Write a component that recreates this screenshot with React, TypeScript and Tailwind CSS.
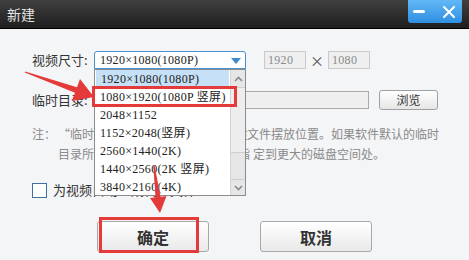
import { useState } from "react";

const sizes = [
  "1920×1080(1080P)",
  "1080×1920(1080P 竖屏)",
  "2048×1152",
  "1152×2048(竖屏)",
  "2560×1440(2K)",
  "1440×2560(2K 竖屏)",
  "3840×2160(4K)",
];

const num = "font-['Liberation_Serif','Noto_Sans_CJK_SC',serif] tracking-[0.3px]";

function Chevron({ up }: { up?: boolean }) {
  return (
    <svg width="9" height="6" viewBox="0 0 9 6">
      <path
        d={up ? "M1 5 L4.5 1.5 L8 5" : "M1 1 L4.5 4.5 L8 1"}
        fill="none"
        stroke="#8a8a8a"
        strokeWidth="1.6"
      />
    </svg>
  );
}

function SizeSelect() {
  const [value] = useState(sizes[0]);

  return (
    <div className="relative w-[152px] h-[18px] bg-white border border-[#4a8fcf] rounded-t-[3px] flex items-center pl-[5px]">
      <span className={`text-[12px] text-[#222] ${num}`}>{value}</span>
      <svg className="absolute right-[4px] top-[6px]" width="10" height="6" viewBox="0 0 10 6">
        <path d="M0 0 H10 L5 6 Z" fill="#3a8ad0" />
      </svg>

      <div className="absolute left-[-1px] top-[17px] w-[152px] h-[127px] bg-white border border-[#8c8c8c] flex z-10">
        <ul className="flex-1">
          {sizes.map((s, i) => (
            <li
              key={s}
              className={`h-[18px] flex items-center pl-[5px] text-[12px] text-[#222] ${num} ${
                i === 0 ? "bg-[#c6e0f7] mx-[1px] pl-[4px]" : ""
              }`}
            >
              {s}
            </li>
          ))}
        </ul>
        <div className="w-[15px] flex flex-col bg-[#e6e6e6] border-l border-[#d4d4d4]">
          <div className="h-[17px] flex items-center justify-center">
            <Chevron up />
          </div>
          <div className="h-[66px] bg-[#ededed] border-y border-[#cfcfcf]" />
          <div className="flex-1" />
          <div className="h-[16px] flex items-center justify-center border-t border-[#cfcfcf]">
            <Chevron />
          </div>
        </div>
      </div>
    </div>
  );
}

export default function App() {
  return (
    <div className="relative w-[469px] h-[260px] overflow-hidden bg-[#f4f5f7] font-['Noto_Sans_CJK_SC',sans-serif]">
      <header className="h-[29px] flex justify-between bg-gradient-to-b from-[#404040] to-[#1e1e1e] border-b border-black">
        <h1 className="pl-[7px] pt-[4px] text-[14px] leading-[20px] text-[#e4e4e4]">新建</h1>
        <div className="mr-[7px] w-[54px] h-[23px] rounded-b-[3px] bg-gradient-to-b from-[#62b8f6] to-[#2f8fe0] flex items-center justify-between px-[5px]">
          <span className="w-[12px] h-[3px] rounded-full bg-white" />
          <svg width="12" height="12" viewBox="0 0 12 12" className="mr-[2px]">
            <path d="M1 1 L11 11 M11 1 L1 11" stroke="white" strokeWidth="2" strokeLinecap="round" />
          </svg>
        </div>
      </header>

      <main className="pl-[32px] pt-[22px] text-[#333]">
        <div className="flex items-center h-[18px]">
          <span className="w-[62px] text-[13px]">视频尺寸:</span>
          <SizeSelect />
          <div className={`ml-[18px] w-[42px] h-[18px] bg-[#efefef] border border-[#c9c9c9] flex items-center pl-[3px] text-[12px] text-[#8a8a8a] ${num}`}>
            1920
          </div>
          <span className="w-[22px] text-center text-[14px] text-[#555]">×</span>
          <div className={`w-[42px] h-[18px] bg-[#efefef] border border-[#c9c9c9] flex items-center pl-[3px] text-[12px] text-[#8a8a8a] ${num}`}>
            1080
          </div>
        </div>

        <div className="mt-[21px] flex items-center h-[20px]">
          <span className="w-[62px] text-[13px]">临时目录:</span>
          <div className="w-[275px] h-[18px] bg-[#efefef] border border-[#a9a9a9]" />
          <button className="ml-[10px] w-[59px] h-[20px] rounded-[3px] border border-[#a0a0a0] bg-gradient-to-b from-white to-[#e6e6e6] text-[12px] text-[#333]">
            浏览
          </button>
        </div>

        <div className="mt-[14px] flex text-[12px] leading-[20px] text-[#8a8a8a]">
          <span className="w-[26px]">注：</span>
          <p className="whitespace-nowrap">
            <span className="inline-block w-[189px] overflow-hidden align-top">“临时目录”是视频编辑过程中临时</span>
            文件摆放位置。如果软件默认的临时
            <br />
            <span className="inline-block w-[195px] overflow-hidden align-top">目录所在的磁盘空间不足，请手动指</span>
            定到更大的磁盘空间处。
          </p>
        </div>

        <label className="mt-[16px] flex items-center h-[20px] gap-[6px] text-[13px]">
          <span className="w-[15px] h-[15px] bg-white border border-[#3f6f9e]" />
          为视频自动生成代理文件
        </label>

        <div className="mt-[21px] ml-[65px] flex gap-[51px]">
          <button className="w-[112px] h-[31px] rounded-[3px] border border-[#a8a8a8] bg-gradient-to-b from-white to-[#e9e9e9] text-[16px] font-bold text-[#333]">
            确定
          </button>
          <button className="w-[112px] h-[31px] rounded-[3px] border border-[#a8a8a8] bg-gradient-to-b from-white to-[#e9e9e9] text-[16px] font-bold text-[#333]">
            取消
          </button>
        </div>
      </main>

      <div className="absolute left-[92px] top-[86px] w-[145px] h-[21px] border-[3px] border-[#e53a3a] z-20" />
      <div className="absolute left-[99px] top-[217px] w-[100px] h-[36px] border-[3px] border-[#e53a3a] z-20" />
      <svg className="absolute left-0 top-0 z-20 pointer-events-none" width="469" height="260" viewBox="0 0 469 260">
        <polygon
          points="25.2,71.4 77,87.2 80,79 94,97 72,101 75,92.8 24.8,72.6"
          fill="#e53a3a"
        />
        <polygon
          points="153.3,166 155.5,197.3 150,198 160,213 166.5,196 160.5,196.7 154.7,166"
          fill="#e53a3a"
        />
      </svg>
    </div>
  );
}
